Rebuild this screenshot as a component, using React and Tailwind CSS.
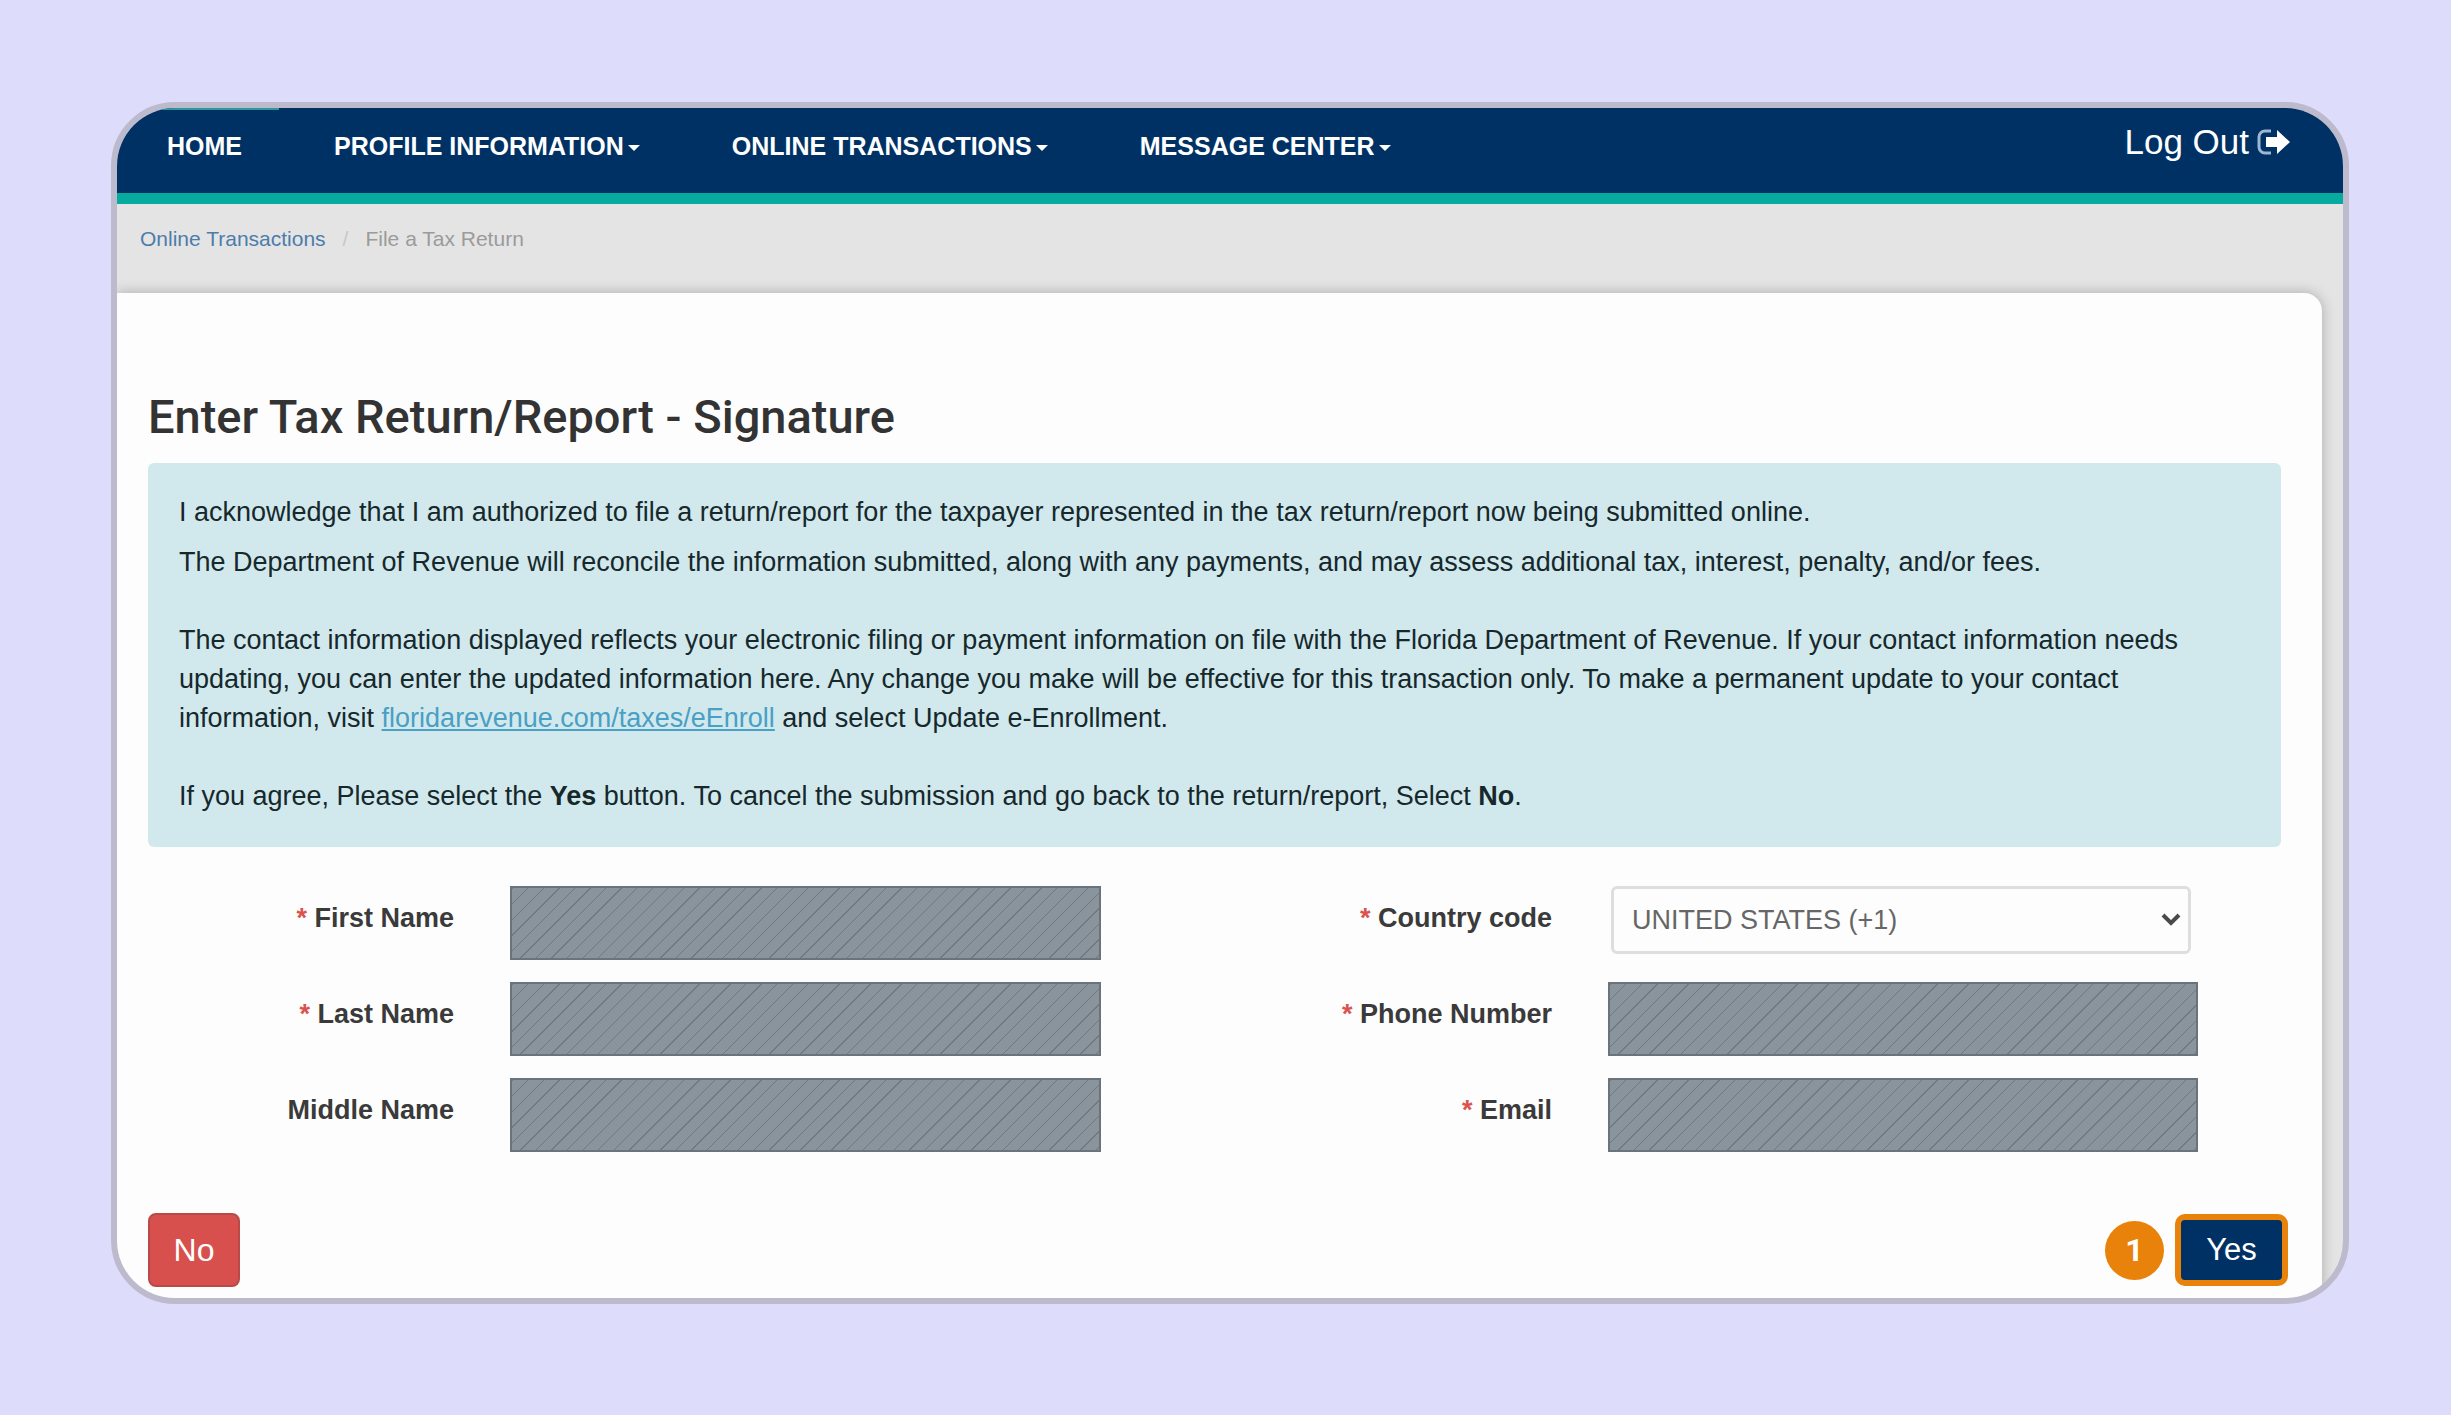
const NAV_ITEMS = [
  { label: 'HOME', active: true },
  { label: 'PROFILE INFORMATION', menu: true },
  { label: 'ONLINE TRANSACTIONS', menu: true },
  { label: 'MESSAGE CENTER', menu: true },
]

function LogOutIcon() {
  return (
    <svg viewBox="0 0 34 26" className="w-[34px] h-[26px]" aria-hidden="true">
      <path d="M14 2H8a6 6 0 0 0-6 6v10a6 6 0 0 0 6 6h6" fill="none" stroke="#9fb6d2" strokeWidth="3" />
      <path d="M9 8h11V1l13 12-13 12v-7H9z" fill="#fff" />
    </svg>
  )
}

function Navbar() {
  return (
    <header className="flex justify-between h-24 bg-[#003164] border-b-[11px] border-[#06aa9e] text-white">
      <nav className="flex gap-[18px] pl-[13px]">
        {NAV_ITEMS.map((item) => (
          <a
            key={item.label}
            href="#"
            className={
              item.active
                ? 'px-[37px] pt-[18px] border-t-2 border-[#2f969f] text-[25px] leading-9 font-bold'
                : 'px-[37px] pt-[20px] text-[25px] leading-9 font-bold'
            }
          >
            {item.label}
            {item.menu && (
              <span className="inline-block ml-1 align-middle border-x-[6px] border-t-[6px] border-x-transparent border-t-white" />
            )}
          </a>
        ))}
      </nav>
      <a href="#" className="flex items-center gap-2 h-[68px] pr-[52px] text-[35px] leading-10">
        Log Out
        <LogOutIcon />
      </a>
    </header>
  )
}

function Breadcrumb() {
  return (
    <nav aria-label="Breadcrumb" className="flex h-[89px] pl-[23px] pt-[21px] text-[21px] leading-7">
      <a href="#" className="text-[#4d7cab]">Online Transactions</a>
      <span className="px-[17px] text-[#c8c8c8]">/</span>
      <span className="text-[#9b9b9b]">File a Tax Return</span>
    </nav>
  )
}

function Label({ htmlFor, required, children }) {
  return (
    <label htmlFor={htmlFor} className="pr-[56px] pt-[13px] text-right text-[27px] leading-[39px] font-bold text-[#3a3a3a]">
      {required && <span className="text-[#d9534f]">* </span>}
      {children}
    </label>
  )
}

function RedactedInput({ id }) {
  return (
    <input
      id={id}
      type="text"
      className="block w-full h-[74px] border-2 border-[#6b747b] bg-[repeating-linear-gradient(135deg,#6f7981_0px,#6f7981_1px,#8a949d_1px,#8a949d_11px)]"
    />
  )
}

function CountrySelect({ id }) {
  return (
    <div className="relative ml-[3px] mr-[7px] h-[68px]">
      <select
        id={id}
        className="appearance-none w-full h-full pl-[18px] border-[3px] border-[#dedede] rounded-md bg-[#fdfdfd] text-[27px] text-[#666]"
      >
        <option>UNITED STATES (+1)</option>
      </select>
      <svg viewBox="0 0 20 14" className="absolute right-[10px] top-[27px] w-5 h-[14px] pointer-events-none" aria-hidden="true">
        <path d="M2 2l8 8 8-8" fill="none" stroke="#4a4a4a" strokeWidth="4" />
      </svg>
    </div>
  )
}

function Notice() {
  return (
    <div className="pl-[31px] pr-10 pt-[30px] pb-[31px] rounded-md bg-[#d1e9ed] text-[27px] leading-[39px] text-[#16282c]">
      <p className="mb-[11px]">
        I acknowledge that I am authorized to file a return/report for the taxpayer represented in the tax return/report now being submitted online.
      </p>
      <p className="mb-[39px]">
        The Department of Revenue will reconcile the information submitted, along with any payments, and may assess additional tax, interest, penalty, and/or fees.
      </p>
      <p className="mb-[39px]">
        The contact information displayed reflects your electronic filing or payment information on file with the Florida Department of Revenue. If your contact information needs updating, you can enter the updated information here. Any change you make will be effective for this transaction only. To make a permanent update to your contact information, visit{' '}
        <a href="#" className="text-[#4a9fc4] underline">floridarevenue.com/taxes/eEnroll</a> and select Update e-Enrollment.
      </p>
      <p>
        If you agree, Please select the <b>Yes</b> button. To cancel the submission and go back to the return/report, Select <b>No</b>.
      </p>
    </div>
  )
}

export default function App() {
  return (
    <div className="min-h-screen pl-[111px] pr-[102px] pt-[102px] pb-[111px] bg-[#dedcfb] font-['Liberation_Sans',Arial,sans-serif]">
      <div className="overflow-hidden rounded-[64px] border-[6px] border-[#bcbacc] bg-[#e4e4e4]">
        <Navbar />
        <Breadcrumb />
        <main className="mr-[21px] pl-[31px] pr-[41px] pt-[96px] pb-[11px] rounded-tr-[18px] bg-[#fdfdfd] shadow-[0_0_14px_rgba(0,0,0,0.25)]">
          <h1 className="mb-[18px] font-[Roboto,sans-serif] text-[47px] leading-[56px] font-medium text-[#333]">
            Enter Tax Return/Report - Signature
          </h1>
          <Notice />
          <form>
            <div className="grid grid-cols-[362fr_591fr_507fr_590fr] gap-y-[22px] mt-[39px] pr-[83px]">
              <Label htmlFor="firstName" required>First Name</Label>
              <RedactedInput id="firstName" />
              <Label htmlFor="countryCode" required>Country code</Label>
              <CountrySelect id="countryCode" />

              <Label htmlFor="lastName" required>Last Name</Label>
              <RedactedInput id="lastName" />
              <Label htmlFor="phone" required>Phone Number</Label>
              <RedactedInput id="phone" />

              <Label htmlFor="middleName">Middle Name</Label>
              <RedactedInput id="middleName" />
              <Label htmlFor="email" required>Email</Label>
              <RedactedInput id="email" />
            </div>
            <div className="flex items-center justify-between mt-[61px]">
              <button type="button" className="w-[92px] h-[74px] rounded-lg border-2 border-[#b94a48] bg-[#d8504d] text-[32px] text-white">
                No
              </button>
              <div className="flex items-center gap-[11px] -mr-[7px]">
                <span className="flex items-center justify-center size-[59px] rounded-full bg-[#e8820a] font-[Roboto,sans-serif] text-[32px] font-bold text-white">
                  1
                </span>
                <button type="button" className="w-[113px] h-[72px] rounded-[10px] border-[6px] border-[#e8820a] bg-[#003164] text-[31px] text-white">
                  Yes
                </button>
              </div>
            </div>
          </form>
        </main>
      </div>
    </div>
  )
}
